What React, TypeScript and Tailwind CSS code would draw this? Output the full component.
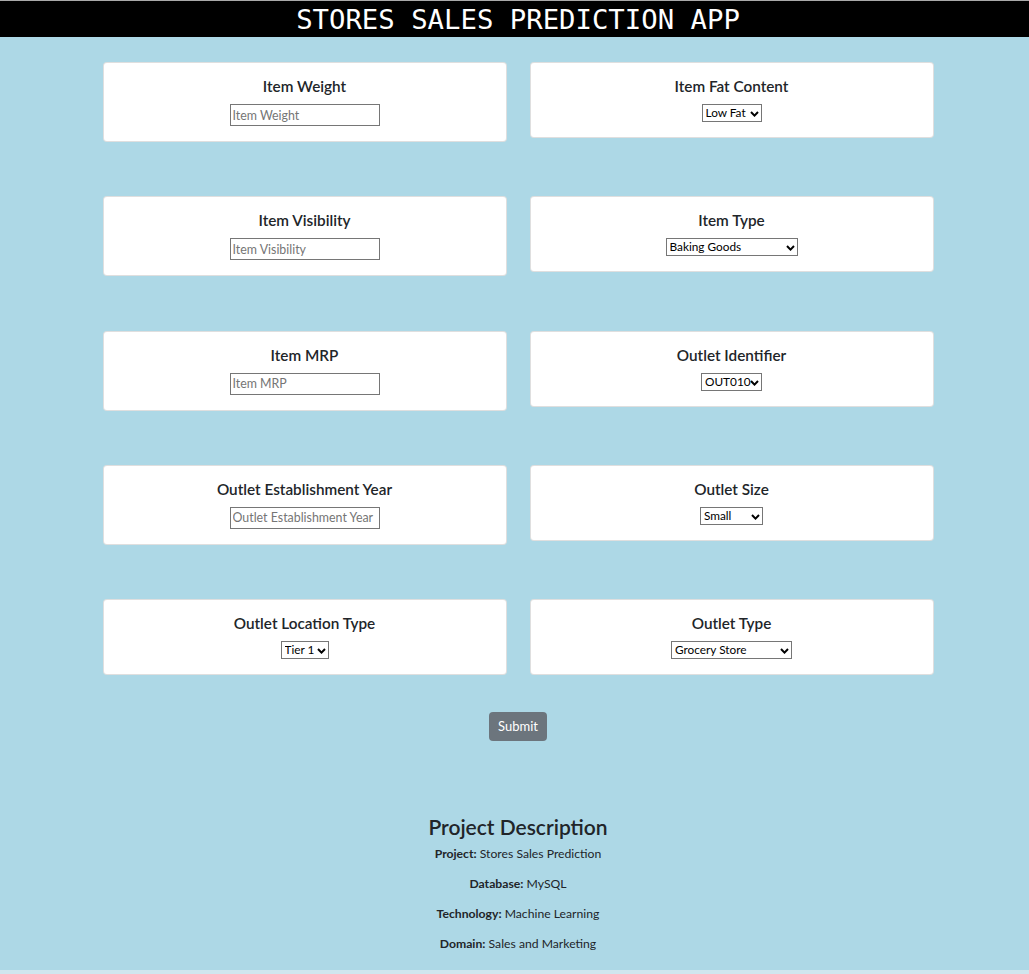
import React from "react";

type Field =
  | { label: string; kind: "input" }
  | { label: string; kind: "select"; options: string[]; width: number };

const rows: Field[][] = [
  [
    { label: "Item Weight", kind: "input" },
    { label: "Item Fat Content", kind: "select", options: ["Low Fat", "Regular"], width: 60 },
  ],
  [
    { label: "Item Visibility", kind: "input" },
    {
      label: "Item Type",
      kind: "select",
      width: 132,
      options: [
        "Baking Goods",
        "Breads",
        "Breakfast",
        "Canned",
        "Dairy",
        "Frozen Foods",
        "Fruits and Vegetables",
        "Hard Drinks",
        "Health and Hygiene",
        "Household",
        "Meat",
        "Others",
        "Seafood",
        "Snack Foods",
        "Soft Drinks",
        "Starchy Foods",
      ],
    },
  ],
  [
    { label: "Item MRP", kind: "input" },
    {
      label: "Outlet Identifier",
      kind: "select",
      width: 61,
      options: ["OUT010", "OUT013", "OUT017", "OUT018", "OUT019", "OUT027", "OUT035", "OUT045", "OUT046", "OUT049"],
    },
  ],
  [
    { label: "Outlet Establishment Year", kind: "input" },
    { label: "Outlet Size", kind: "select", options: ["Small", "Medium", "High"], width: 63 },
  ],
  [
    { label: "Outlet Location Type", kind: "select", options: ["Tier 1", "Tier 2", "Tier 3"], width: 48 },
    {
      label: "Outlet Type",
      kind: "select",
      width: 121,
      options: ["Grocery Store", "Supermarket Type1", "Supermarket Type2", "Supermarket Type3"],
    },
  ],
];

function Select({ options, width }: { options: string[]; width: number }) {
  return (
    <div className="relative h-[18px]" style={{ width }}>
      <select className="block appearance-none w-full h-full border border-[#767676] bg-white pl-[3px] pr-[10px] py-0 text-[11.8px] leading-[16px] text-black rounded-none outline-none">
        {options.map((o) => (
          <option key={o}>{o}</option>
        ))}
      </select>
      <svg
        className="absolute right-[3px] top-[7px] pointer-events-none"
        width="9"
        height="6"
        viewBox="0 0 9 6"
      >
        <path d="M1 1 L4.5 4.6 L8 1" fill="none" stroke="#000" strokeWidth="2" />
      </svg>
    </div>
  );
}

function Card({ field }: { field: Field }) {
  return (
    <div className="bg-white border border-black/[0.125] rounded-[4px] flex flex-col items-center pt-[14px] pb-[15px]">
      <h5 className="text-[15.3px] leading-[19px] font-semibold text-[#212529] mb-[8px]">{field.label}</h5>
      {field.kind === "input" ? (
        <input
          type="text"
          placeholder={field.label}
          className="block w-[150px] h-[22px] border border-[#767676] bg-white px-[2px] text-[12.4px] text-black placeholder:text-[#757575] outline-none rounded-none"
        />
      ) : (
        <Select options={field.options} width={field.width} />
      )}
    </div>
  );
}

export default function App() {
  return (
    <div className="min-h-[974px] bg-[#d0e6ee] font-['Lato',sans-serif] text-[#212529]">
      <div className="border-t border-[#a9a9a9] bg-black h-[37px] flex items-center justify-center pl-[7px] pt-[2px]">
        <h1 className="text-white text-[27.3px] font-['DejaVu_Sans_Mono',monospace] leading-none">
          STORES SALES PREDICTION APP
        </h1>
      </div>
      <div className="bg-[#add8e6] pl-[7px] pt-[25px] pb-[16px] flex flex-col items-center">
        <div className="grid grid-cols-[404px_404px] gap-x-[23px] gap-y-[54.25px] items-start">
          {rows.map((row, i) => (
            <React.Fragment key={i}>
              <Card field={row[0]} />
              <Card field={row[1]} />
            </React.Fragment>
          ))}
        </div>
        <button className="mt-[37px] w-[58px] h-[29px] rounded-[4px] bg-[#6c757d] text-white text-[13px]">
          Submit
        </button>
        <h4 className="mt-[73px] text-[21px] leading-[25px] font-semibold text-[#212529]">Project Description</h4>
        <div className="mt-[5px] flex flex-col items-center gap-[10px] text-[12.2px] leading-[20px]">
          <p>
            <b className="font-bold">Project:</b> Stores Sales Prediction
          </p>
          <p>
            <b className="font-bold">Database:</b> MySQL
          </p>
          <p>
            <b className="font-bold">Technology:</b> Machine Learning
          </p>
          <p>
            <b className="font-bold">Domain:</b> Sales and Marketing
          </p>
        </div>
      </div>
    </div>
  );
}
